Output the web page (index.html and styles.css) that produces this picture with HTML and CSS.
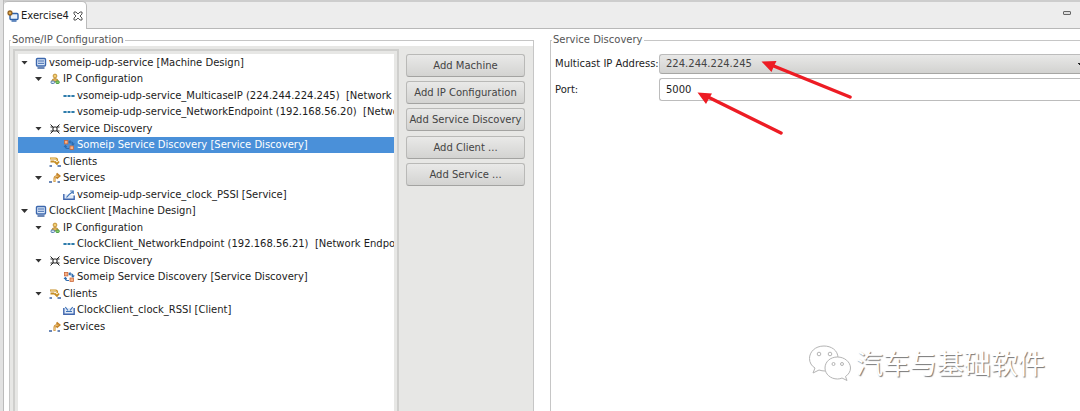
FILE: index.html
```html
<!DOCTYPE html>
<html lang="en">
<head>
  <meta charset="UTF-8">
  <title>Exercise4</title>
  <link rel="stylesheet" href="styles.css">
</head>
<body>
  <!-- Icon set -->
  <svg class="sprite" aria-hidden="true">
    <symbol id="i-machine" viewBox="0 0 12 12">
      <rect x="1.5" y="1.5" width="9" height="7.5" rx="1" fill="#dbe8f8" stroke="#3c67ad" stroke-width="1.4"/>
      <path d="M3 4h6M3 6.3h6" stroke="#3c67ad"/>
      <path d="M2.5 11h7" stroke="#2d5597" stroke-width="1.4"/>
    </symbol>
    <symbol id="i-ip" viewBox="0 0 12 12">
      <path d="M2.5 8.5Q3 5.5 6 5.500T9.500 8.500z" fill="#e3b455" stroke="#a97a2a" stroke-width=".7"/>
      <circle cx="6" cy="3" r="1.900" fill="#f3cf72" stroke="#b78224" stroke-width=".8"/>
      <rect x="2" y="8" width="3.500" height="2.500" rx="1" fill="#d7e5f4" stroke="#4a74a8" stroke-width=".9"/>
      <rect x="6.800" y="8" width="3.500" height="2.500" rx="1" fill="#8ed06a" stroke="#3f9140" stroke-width=".9"/>
    </symbol>
    <symbol id="i-endpoint" viewBox="0 0 12 12">
      <path d="M.5 6h11" stroke="#9cc3dc"/>
      <path d="M.5 6h3M4.700 6h2.600M8.500 6h3" stroke="#2f7cab" stroke-width="2"/>
    </symbol>
    <symbol id="i-discovery" viewBox="0 0 12 12">
      <rect x="4" y="4" width="4" height="4" rx="1" fill="#fff" stroke="#222" stroke-width="1.100"/>
      <path d="M1.500 1.500L4 4M10.500 1.500L8 4M1.500 10.500L4 8M10.500 10.500L8 8M1.500 4h2.300M8.200 4h2.300M1.500 8h2.300M8.200 8h2.300" fill="none" stroke="#222"/>
    </symbol>
    <symbol id="i-someip" viewBox="0 0 12 12">
      <rect x="1.500" y="1.500" width="3.400" height="3.400" fill="#f7b184" stroke="#c9673b" stroke-width=".8"/>
      <rect x="7" y="7" width="3.400" height="3.400" fill="#f7b184" stroke="#c9673b" stroke-width=".8"/>
      <path d="M6 3h2.500Q10 3 10 5.500M8.500 4.500L10 6l1.300-1.500M6 9.500H4Q2.300 9.500 2.300 7M1 8l1.300-1.500L3.700 8M7.500 1.500L6 3l1.500 1.400" fill="none" stroke="#2d6caf" stroke-width="1.100"/>
    </symbol>
    <symbol id="i-clients" viewBox="0 0 12 12">
      <path d="M1 2.500h5.500q2 0 1.700 2.500M1.500 5.500h3.800M5.500 5.500L8 8l2-2.500" fill="none" stroke="#c58c22" stroke-width="1.800"/>
      <path d="M1.500 2.500h5q1.500 0 1.600 3.500" fill="none" stroke="#f6dc95" stroke-width=".7"/>
      <path d="M.5 10h2.500M8.500 10H12" stroke="#3c62a0" stroke-width="1.500"/>
    </symbol>
    <symbol id="i-services" viewBox="0 0 12 12">
      <path d="M5.500 10V6.500Q5.500 4 9 4M7.500 1.500L10.500 4 7.500 6.500" fill="none" stroke="#c58328" stroke-width="2"/>
      <path d="M5.500 9.500V6.500Q5.500 4 9.500 4" fill="none" stroke="#f6d58b" stroke-width=".8"/>
      <path d="M0 10h3M8.500 10h2.500" stroke="#3c62a0" stroke-width="1.500"/>
    </symbol>
    <symbol id="i-pssi" viewBox="0 0 12 12">
      <path d="M.8 5v5.200h10.400V6.500" fill="#dfe9f7" stroke="#4167ae" stroke-width="1.400"/>
      <path d="M3.500 8.500Q5.500 5.500 9.500 3M7.200 2h3v3" fill="none" stroke="#3f73b7" stroke-width="1.200"/>
    </symbol>
    <symbol id="i-rssi" viewBox="0 0 12 12">
      <path d="M.8 4v6.200h10.400V4" fill="#dfe9f7" stroke="#4167ae" stroke-width="1.400"/>
      <path d="M2.300 3L5 6.500M9.700 3L7 6.500M3 7.500h6" fill="none" stroke="#3f73b7" stroke-width="1.200"/>
    </symbol>
  </svg>

  <div class="editor">
    <header class="tab-bar">
      <div class="tab">
        <svg class="tab-icon" viewBox="0 0 12 12">
          <rect x="3" y="3.500" width="8" height="6" rx="1" fill="#e9f2fc" stroke="#2e62aa" stroke-width="1.400"/>
          <path d="M4.500 11h5" stroke="#2e62aa" stroke-width="1.400"/>
          <path d="M3 0v6M0 3h6M.9.9l4.200 4.200M5.100.9L.9 5.100" stroke="#8c5b1c" stroke-width="1.200"/>
          <circle cx="3" cy="3" r="1.700" fill="#e0a94a" stroke="#8c5b1c" stroke-width=".7"/>
        </svg>
        <span>Exercise4</span>
        <button class="tab-close" aria-label="Close">
          <svg viewBox="0 0 10 10"><path d="M1 1h2l2 2 2-2h2v2L7 5l2 2v2H7L5 7 3 9H1V7l2-2-2-2z" fill="#fff" stroke="#555"/></svg>
        </button>
      </div>
      <button class="minimize" aria-label="Minimize"></button>
    </header>

    <main class="panes">
      <fieldset class="group">
        <legend>Some/IP Configuration</legend>
        <div class="config">
          <div class="tree-frame">
            <ul class="tree">
              <li class="node level-1 open"><svg><use href="#i-machine"/></svg>vsomeip-udp-service [Machine Design]</li>
              <li class="node level-2 open"><svg><use href="#i-ip"/></svg>IP Configuration</li>
              <li class="node level-3"><svg><use href="#i-endpoint"/></svg>vsomeip-udp-service_MulticaseIP (224.244.224.245)&nbsp; [Network Endpoint]</li>
              <li class="node level-3"><svg><use href="#i-endpoint"/></svg>vsomeip-udp-service_NetworkEndpoint (192.168.56.20)&nbsp; [Network Endpoint]</li>
              <li class="node level-2 open"><svg><use href="#i-discovery"/></svg>Service Discovery</li>
              <li class="node level-3 selected"><svg><use href="#i-someip"/></svg>Someip Service Discovery [Service Discovery]</li>
              <li class="node level-2"><svg><use href="#i-clients"/></svg>Clients</li>
              <li class="node level-2 open"><svg><use href="#i-services"/></svg>Services</li>
              <li class="node level-3"><svg><use href="#i-pssi"/></svg>vsomeip-udp-service_clock_PSSI [Service]</li>
              <li class="node level-1 open"><svg><use href="#i-machine"/></svg>ClockClient [Machine Design]</li>
              <li class="node level-2 open"><svg><use href="#i-ip"/></svg>IP Configuration</li>
              <li class="node level-3"><svg><use href="#i-endpoint"/></svg>ClockClient_NetworkEndpoint (192.168.56.21)&nbsp; [Network Endpoint]</li>
              <li class="node level-2 open"><svg><use href="#i-discovery"/></svg>Service Discovery</li>
              <li class="node level-3"><svg><use href="#i-someip"/></svg>Someip Service Discovery [Service Discovery]</li>
              <li class="node level-2 open"><svg><use href="#i-clients"/></svg>Clients</li>
              <li class="node level-3"><svg><use href="#i-rssi"/></svg>ClockClient_clock_RSSI [Client]</li>
              <li class="node level-2"><svg><use href="#i-services"/></svg>Services</li>
            </ul>
          </div>
          <div class="actions">
            <button>Add Machine</button>
            <button>Add IP Configuration</button>
            <button>Add Service Discovery</button>
            <button>Add Client ...</button>
            <button>Add Service ...</button>
          </div>
        </div>
      </fieldset>

      <fieldset class="group details">
        <legend>Service Discovery</legend>
        <div class="form">
          <label for="multicast">Multicast IP Address:</label>
          <select id="multicast"><option>224.244.224.245</option></select>
          <label for="port">Port:</label>
          <input id="port" type="text" value="5000">
        </div>
      </fieldset>
    </main>
  </div>

  <!-- Red pointers over the form -->
  <svg class="pointers" viewBox="0 0 160 80" aria-hidden="true">
    <path d="M78 6.500L158 39M14 38L89 75" stroke="#ed1c24" stroke-width="3.500" stroke-linecap="round"/>
    <path d="M69.500 3.500L84.500 3 82 8 79.500 14zM5.500 34.500L20 35.500 17 40.500 14 46z" fill="#ed1c24"/>
  </svg>

  <div class="watermark">
    <svg viewBox="0 0 44 38">
      <path d="M30 14C30 6 23 2 16 2 7 2 1.500 8 1.500 14.500c0 4 2 7.500 5.500 9.500l-2 5 6-3q3 1 6 1"/>
      <path d="M29.500 13C22 13 17 18 17 24s5.500 11 12.500 11q2.500 0 4.500-1l5 2.500-1.500-4c3-2 5-5 5-8.500 0-6-6-11-13-11z"/>
      <circle cx="11" cy="10" r="1.800"/><circle cx="22" cy="10" r="1.800"/>
      <circle cx="25.500" cy="20" r="1.500"/><circle cx="34" cy="20" r="1.500"/>
    </svg>
    <span lang="zh">汽车与基础软件</span>
  </div>
</body>
</html>
```
FILE: styles.css
```css
* {
  box-sizing: border-box;
}

body {
  margin: 0;
  height: 100vh;
  overflow: hidden;
  background: #e2e2e2;
  color: #1c1c1c;
  font: 10px/16px "DejaVu Sans", sans-serif;
}

button,
input,
select {
  font: inherit;
}

.sprite {
  display: none;
}

.editor {
  display: flex;
  flex-direction: column;
  height: 100%;
  margin-left: 3px;
  border-left: 1px solid #bbb;
  background: #fff;
}

/* Tab bar */
.tab-bar {
  display: flex;
  justify-content: space-between;
  height: 29px;
  border-top: 2px solid #cdcdcd;
  border-bottom: 1px solid #b8b8b8;
  background: #ededed;
}

.tab {
  display: flex;
  align-items: center;
  gap: 2px;
  height: 28px;
  margin-top: -1px;
  padding: 0 3px;
  border: 1px solid #bbb;
  border-width: 1px 1px 0 0;
  border-radius: 4px 5px 0 0;
  background: #fff;
}

.tab-icon {
  width: 12px;
  height: 12px;
}

.tab-close {
  width: 10px;
  height: 10px;
  margin-left: 2px;
  padding: 0;
  border: 0;
  background: none;
}

.tab-close svg {
  display: block;
}

.minimize {
  width: 8px;
  height: 4px;
  margin: 9px 9px 0 0;
  padding: 0;
  border: 1px solid #666;
  border-radius: 1px;
  background: #ddd;
}

/* Panes */
.panes {
  display: grid;
  grid-template-columns: 525fr 530fr;
  gap: 16px;
  flex: 1;
  padding: 5px 0 0 5px;
}

.group {
  display: flex;
  flex-direction: column;
  min-width: 0;
  margin: 0;
  padding: 0;
  border: 1px solid #c6c6c6;
  border-bottom: 0;
}

.group legend {
  margin-left: 1px;
  padding: 0 1px;
  color: #555;
  line-height: 12px;
}

.config {
  display: flex;
  flex: 1;
  gap: 7px;
  min-width: 0;
  padding: 3px 8px 0 3px;
  background: #e7e7e5;
}

.tree-frame {
  flex: 1;
  min-width: 0;
  padding: 3px 3px 0;
  border: 2px solid #cfcfcd;
  border-bottom: 0;
}

/* Tree */
.tree {
  display: grid;
  grid-auto-rows: 17px 16px;
  align-content: start;
  height: 100%;
  margin: 0;
  padding: 0;
  overflow: hidden;
  background: #fff;
  list-style: none;
}

.node {
  display: flex;
  align-items: center;
  gap: 2px;
  white-space: nowrap;
}

.node::before {
  content: "";
  flex: none;
  width: 7px;
  height: 4px;
  margin-right: 5px;
}

.open::before {
  background: #333;
  clip-path: polygon(0 0, 100% 0, 50% 100%);
}

.node svg {
  flex: none;
  width: 12px;
  height: 12px;
}

.level-1 {
  padding-left: 3px;
}

.level-2 {
  padding-left: 17px;
}

.level-3 {
  padding-left: 31px;
}

.selected {
  background: #4a90d9;
  color: #fff;
}

/* Buttons */
.actions {
  display: grid;
  grid-auto-rows: 27px 27px 28px;
  align-content: start;
  width: 119px;
  padding-top: 5px;
}

.actions button {
  height: 23px;
  padding: 0;
  border: 1px solid #b9b9b7;
  border-bottom-color: #a3a3a1;
  border-radius: 3px;
  background: linear-gradient(#e9e9e8, #d3d3d1);
  color: #444;
  white-space: nowrap;
}

/* Form */
.details {
  border-right: 0;
}

.form {
  display: grid;
  grid-template-columns: 104px 1fr;
  row-gap: 4px;
  align-items: center;
  padding: 8px 0 0 4px;
}

.form select,
.form input {
  width: 100%;
  padding: 0 6px;
  border: 1px solid #bcbcbc;
  border-right: 0;
  border-radius: 3px 0 0 3px;
}

.form select {
  height: 20px;
  appearance: none;
  border-bottom-color: #a6a6a4;
  background:
    conic-gradient(from -45deg at 50% 100%, #222 90deg, transparent 0) right -3px top 8px / 6px 3px no-repeat,
    linear-gradient(#e8e8e7, #d2d2d0);
  color: #444;
}

.form input {
  height: 23px;
  background: #fff;
  color: #222;
}

/* Overlays */
.pointers {
  position: absolute;
  top: 58px;
  left: 692px;
  width: 160px;
  height: 80px;
}

.watermark {
  position: absolute;
  right: 35px;
  bottom: 28px;
  display: flex;
  align-items: center;
  gap: 4px;
  color: #fff;
  font: 27px/40px "Noto Sans CJK SC", sans-serif;
  text-shadow: 1px 1px 1px #777;
}

.watermark svg {
  width: 44px;
  height: 38px;
  fill: #fff;
  stroke: #b4b4b4;
  stroke-width: 1;
}
```
